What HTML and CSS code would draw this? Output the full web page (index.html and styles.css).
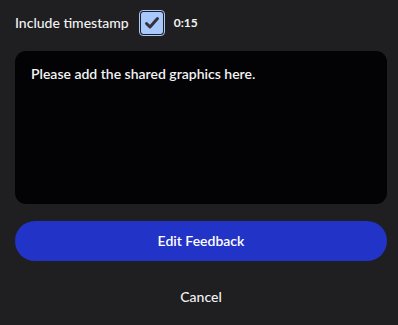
FILE: index.html
```html
<!DOCTYPE html>
<html>
<head>
<meta charset="utf-8">
<link rel="stylesheet" href="styles.css">
</head>
<body>
<div class="panel">
  <div class="ts-row">
    <span class="ts-label">Include timestamp</span>
    <span class="checkbox">
      <svg width="18" height="18" viewBox="0 0 18 18"><path d="M3.5 9.5 L7 13 L14.5 4.5" fill="none" stroke="#333338" stroke-width="3" stroke-linecap="round" stroke-linejoin="round"/></svg>
    </span>
    <span class="ts-time">0:15</span>
  </div>
  <div class="note">Please add the shared graphics here.</div>
  <button class="primary">Edit Feedback</button>
  <button class="secondary">Cancel</button>
</div>
</body>
</html>
```

FILE: styles.css
```css
html, body {
  margin: 0;
  padding: 0;
  background: #1f1f21;
  font-family: Lato, "Open Sans", sans-serif;
  color: #f2f2f2;
}
.panel {
  display: flex;
  flex-direction: column;
  padding: 9px 11px 0 15px;
}
.ts-row {
  display: flex;
  align-items: center;
  height: 27px;
}
.ts-label {
  font-size: 14px;
  font-weight: 500;
}
.checkbox {
  margin-left: 10px;
  width: 22px;
  height: 22px;
  border: 1px solid #a8c7fa;
  box-shadow: inset 0 0 0 1px #1f1f21;
  padding: 1px;
  box-sizing: content-box;
  border-radius: 4px;
  background: #a8c7fa;
  background-clip: content-box;
  display: flex;
  align-items: center;
  justify-content: center;
}
.ts-time {
  margin-left: 9px;
  font-size: 12px;
  font-weight: 700;
}
.note {
  margin-top: 15px;
  height: 153px;
  box-sizing: border-box;
  background: #030306;
  border-radius: 11px;
  padding: 14px 16px;
  font-size: 14px;
  font-weight: 600;
  color: #f4f4f4;
}
.primary {
  margin-top: 17px;
  height: 40px;
  padding: 0 0 2px;
  border: none;
  border-radius: 20px;
  background: #2233c8;
  color: #ffffff;
  font-family: Lato, sans-serif;
  font-size: 14px;
  font-weight: 600;
}
.secondary {
  margin-top: 16px;
  height: 40px;
  padding: 0 0 2px;
  border: none;
  background: transparent;
  color: #f2f2f2;
  font-family: Lato, sans-serif;
  font-size: 14px;
  font-weight: 500;
}
```
